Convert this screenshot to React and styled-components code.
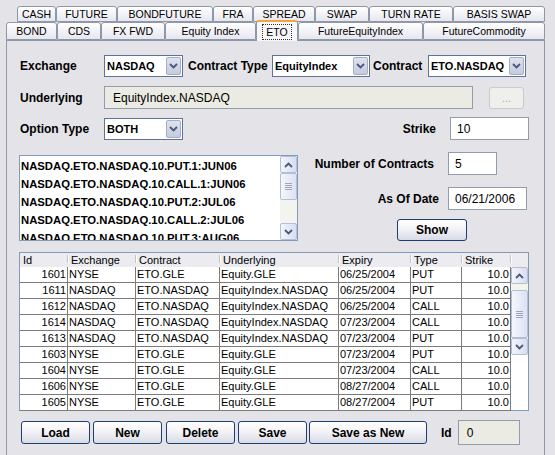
import React from 'react'
import styled, { createGlobalStyle } from 'styled-components'

const GlobalStyle = createGlobalStyle`
    html, body {
        margin: 0;
        padding: 0;
        background: #e3e3e8;
    }
    body {
        font-family: "Liberation Sans", Arial, sans-serif;
        font-size: 12px;
        color: #000;
    }
`

const Frame = styled.div`
    width: 555px;
    height: 455px;
    overflow: hidden;
    box-sizing: border-box;
    padding: 6px 0 0 6px;
`

const TabRow = styled.div`
    display: flex;
    align-items: flex-end;
    height: ${p => p.$h}px;
    padding-left: ${p => p.$indent}px;
`

const Tab = styled.div`
    position: relative;
    box-sizing: border-box;
    width: ${p => p.$w}px;
    height: ${p => (p.$active ? 'calc(100% + 3px)' : '100%')};
    margin-bottom: ${p => (p.$active ? '-1px' : '0')};
    z-index: ${p => (p.$active ? 2 : 1)};
    border: 1px solid #8f98a8;
    border-bottom: ${p => (p.$active ? 'none' : '1px solid #8f98a8')};
    border-top: ${p => (p.$active ? '2px solid #f3a73a' : '1px solid #8f98a8')};
    border-radius: 3px 3px 0 0;
    background: ${p => (p.$active ? '#f7f7f9' : 'linear-gradient(#ffffff, #e6e7ef)')};
    font-size: 10.5px;
    display: flex;
    align-items: center;
    justify-content: center;
    white-space: nowrap;
    span {
        padding: 1px 3px;
        border: ${p => (p.$active ? '1px dotted #333' : '1px solid transparent')};
    }
`

const Panel = styled.div`
    width: 539px;
    height: 430px;
    box-sizing: border-box;
    border: 1px solid #8f98a8;
    border-bottom: none;
    padding: 14px 0 0 12px;
    background: #e3e3e8;
`

const Content = styled.div`
    width: 510px;
    display: flex;
    flex-direction: column;
`

const Row = styled.div`
    display: flex;
    align-items: center;
    height: ${p => p.$h}px;
    margin-top: ${p => p.$mt || 0}px;
`

const Label = styled.div`
    box-sizing: border-box;
    width: ${p => (p.$w ? `${p.$w}px` : 'auto')};
    margin-left: ${p => p.$ml || 0}px;
    margin-right: ${p => p.$mr || 0}px;
    text-align: ${p => p.$align || 'left'};
    font-weight: bold;
    font-size: 12px;
    white-space: nowrap;
    padding-left: ${p => p.$pl || 0}px;
`

const Combo = styled.div`
    box-sizing: border-box;
    display: flex;
    width: ${p => p.$w}px;
    height: 22px;
    border: 1px solid #5d7397;
    background: #fff;
`

const ComboText = styled.div`
    flex: 1;
    display: flex;
    align-items: center;
    padding-left: 2px;
    font-weight: bold;
    font-size: 11px;
    white-space: nowrap;
    overflow: hidden;
`

const ComboArrow = styled.div`
    width: 15px;
    margin: 1px;
    box-sizing: border-box;
    border: 1px solid #a7aec4;
    border-radius: 2px;
    background: linear-gradient(#dfe2ee, #c5cbdf);
    display: flex;
    align-items: center;
    justify-content: center;
`

const Field = styled.div`
    box-sizing: border-box;
    width: ${p => p.$w}px;
    height: ${p => p.$h || 23}px;
    margin-left: ${p => p.$ml || 0}px;
    border: 1px solid #939cab;
    background: ${p => (p.$disabled ? '#ebebe4' : '#fff')};
    padding-left: ${p => p.$pl || 6}px;
    display: flex;
    align-items: center;
    font-size: 12px;
    white-space: nowrap;
`

const GhostButton = styled.div`
    box-sizing: border-box;
    width: 35px;
    height: 22px;
    margin-left: 16px;
    border: 1px solid #c8cad0;
    border-radius: 3px;
    background: #efefec;
    color: #aca899;
    font-size: 11px;
    display: flex;
    align-items: center;
    justify-content: center;
`

const Spacer = styled.div`
    flex: 1;
`

const Section = styled.div`
    display: flex;
    margin-top: 12px;
    height: 89px;
`

const ListBox = styled.div`
    box-sizing: border-box;
    display: flex;
    width: 279px;
    height: 86px;
    margin-top: 3px;
    border: 1px solid #7f9db9;
    background: #fff;
`

const ListItems = styled.div`
    flex: 1;
    overflow: hidden;
    padding: 1px 0 0 1px;
`

const ListItem = styled.div`
    height: 18px;
    line-height: 18px;
    font-weight: bold;
    font-size: 11.3px;
    white-space: nowrap;
`

const VScroll = styled.div`
    width: 17px;
    display: flex;
    flex-direction: column;
    background: #f3f3f0;
`

const ScrollBtn = styled.div`
    box-sizing: border-box;
    height: 17px;
    border: 1px solid #b3bfd9;
    border-radius: 2px;
    background: linear-gradient(90deg, #f3f5fc, #d8def0);
    display: flex;
    align-items: center;
    justify-content: center;
`

const Track = styled.div`
    flex: 1;
    display: flex;
    flex-direction: column;
    padding-top: ${p => p.$offset || 0}px;
`

const Thumb = styled.div`
    box-sizing: border-box;
    height: ${p => p.$h}px;
    border: 1px solid #b3bfd9;
    border-radius: 2px;
    background: linear-gradient(90deg, #f5f6fc, #dde2f2);
    display: flex;
    align-items: center;
    justify-content: center;
`

const Grip = styled.div`
    width: 7px;
    height: 7px;
    background: repeating-linear-gradient(#9aa5c0 0 1px, transparent 1px 2px);
`

const RightCol = styled.div`
    flex: 1;
    display: flex;
    flex-direction: column;
`

const PushButton = styled.div`
    box-sizing: border-box;
    width: ${p => p.$w}px;
    height: ${p => p.$h || 23}px;
    margin-left: ${p => p.$ml || 0}px;
    border: 1px solid #1e3d70;
    border-radius: 3px;
    background: linear-gradient(#ffffff 0%, #f3f3f7 45%, #d8dbe6 100%);
    font-weight: bold;
    font-size: 12px;
    display: flex;
    align-items: center;
    justify-content: center;
`

const Table = styled.div`
    box-sizing: border-box;
    display: flex;
    width: 510px;
    height: 159px;
    margin-top: 11px;
    border: 1px solid #7f9db9;
    background: #fff;
`

const TableMain = styled.div`
    width: 491px;
    display: flex;
    flex-direction: column;
`

const HeaderRow = styled.div`
    display: flex;
    height: 14px;
    background: #ebebf0;
`

const HeadCell = styled.div`
    position: relative;
    box-sizing: border-box;
    width: ${p => p.$w}px;
    padding-left: 3px;
    font-size: 11px;
    line-height: 14px;
    white-space: nowrap;
    &::after {
        content: '';
        position: absolute;
        right: 0;
        top: 2px;
        width: 1px;
        height: 8px;
        background: #c2c4cc;
        box-shadow: 1px 0 0 #fff;
    }
`

const BodyRow = styled.div`
    display: flex;
    height: 16px;
`

const Cell = styled.div`
    box-sizing: border-box;
    width: ${p => p.$w}px;
    height: 16px;
    border-right: 1px solid #7c7c7c;
    border-bottom: 1px solid #7c7c7c;
    padding: 0 ${p => (p.$right ? 1 : 0)}px 0 ${p => (p.$right ? 0 : 1)}px;
    text-align: ${p => (p.$right ? 'right' : 'left')};
    font-size: 11px;
    line-height: 15px;
    white-space: nowrap;
    overflow: hidden;
`

const TableSide = styled.div`
    width: 17px;
    display: flex;
    flex-direction: column;
`

const HeadFill = styled.div`
    height: 14px;
    background: #ebebf0;
`

const Chevron = ({ up }) => (
    <svg width='9' height='6' viewBox='0 0 9 6'>
        <polyline
            points={up ? '1,5 4.5,1.5 8,5' : '1,1 4.5,4.5 8,1'}
            fill='none'
            stroke='#4a5878'
            strokeWidth='1.8'
        />
    </svg>
)

const Scrollbar = ({ thumb, offset }) => (
    <VScroll>
        <ScrollBtn><Chevron up /></ScrollBtn>
        <Track $offset={offset}>
            <Thumb $h={thumb}><Grip /></Thumb>
        </Track>
        <ScrollBtn><Chevron /></ScrollBtn>
    </VScroll>
)

const tabsTop = [
    ['CASH', 39], ['FUTURE', 61], ['BONDFUTURE', 96], ['FRA', 40],
    ['SPREAD', 62], ['SWAP', 54], ['TURN RATE', 84], ['BASIS SWAP', 92],
]

const tabsBottom = [
    ['BOND', 51], ['CDS', 44], ['FX FWD', 64], ['Equity Index', 91],
    ['ETO', 42], ['FutureEquityIndex', 125], ['FutureCommodity', 122],
]

const listItems = [
    'NASDAQ.ETO.NASDAQ.10.PUT.1:JUN06',
    'NASDAQ.ETO.NASDAQ.10.CALL.1:JUN06',
    'NASDAQ.ETO.NASDAQ.10.PUT.2:JUL06',
    'NASDAQ.ETO.NASDAQ.10.CALL.2:JUL06',
    'NASDAQ.ETO.NASDAQ.10.PUT.3:AUG06',
]

const columns = [
    ['Id', 48], ['Exchange', 68], ['Contract', 84], ['Underlying', 119],
    ['Expiry', 72], ['Type', 51], ['Strike', 49],
]

const rows = [
    ['1601', 'NYSE', 'ETO.GLE', 'Equity.GLE', '06/25/2004', 'PUT'],
    ['1611', 'NASDAQ', 'ETO.NASDAQ', 'EquityIndex.NASDAQ', '06/25/2004', 'PUT'],
    ['1612', 'NASDAQ', 'ETO.NASDAQ', 'EquityIndex.NASDAQ', '06/25/2004', 'CALL'],
    ['1614', 'NASDAQ', 'ETO.NASDAQ', 'EquityIndex.NASDAQ', '07/23/2004', 'CALL'],
    ['1613', 'NASDAQ', 'ETO.NASDAQ', 'EquityIndex.NASDAQ', '07/23/2004', 'PUT'],
    ['1603', 'NYSE', 'ETO.GLE', 'Equity.GLE', '07/23/2004', 'PUT'],
    ['1604', 'NYSE', 'ETO.GLE', 'Equity.GLE', '07/23/2004', 'CALL'],
    ['1606', 'NYSE', 'ETO.GLE', 'Equity.GLE', '08/27/2004', 'CALL'],
    ['1605', 'NYSE', 'ETO.GLE', 'Equity.GLE', '08/27/2004', 'PUT'],
]

const ComboBox = ({ w, value }) => (
    <Combo $w={w}>
        <ComboText>{value}</ComboText>
        <ComboArrow><Chevron /></ComboArrow>
    </Combo>
)

const App = () => {
    return (
        <Frame>
            <GlobalStyle />
            <TabRow $h={16} $indent={11}>
                {tabsTop.map(([name, w]) => (
                    <Tab key={name} $w={w}><span>{name}</span></Tab>
                ))}
            </TabRow>
            <TabRow $h={18} $indent={0}>
                {tabsBottom.map(([name, w]) => (
                    <Tab key={name} $w={w} $active={name === 'ETO'}><span>{name}</span></Tab>
                ))}
            </TabRow>

            <Panel>
                <Content>
                    <Row $h={22}>
                        <Label $w={85} $pl={1}>Exchange</Label>
                        <ComboBox w={79} value='NASDAQ' />
                        <Label $w={84} $ml={5}>Contract Type</Label>
                        <ComboBox w={98} value='EquityIndex' />
                        <Label $w={55} $ml={3}>Contract</Label>
                        <ComboBox w={98} value='ETO.NASDAQ' />
                    </Row>

                    <Row $h={23} $mt={9}>
                        <Label $w={85} $pl={1}>Underlying</Label>
                        <Field $w={369} $disabled $pl={8}>EquityIndex.NASDAQ</Field>
                        <GhostButton>...</GhostButton>
                    </Row>

                    <Row $h={23} $mt={8}>
                        <Label $w={85} $pl={1}>Option Type</Label>
                        <ComboBox w={79} value='BOTH' />
                        <Spacer />
                        <Label $align='right'>Strike</Label>
                        <Field $w={79} $ml={14}>10</Field>
                    </Row>

                    <Section>
                        <ListBox>
                            <ListItems>
                                {listItems.map(item => (
                                    <ListItem key={item}>{item}</ListItem>
                                ))}
                            </ListItems>
                            <Scrollbar thumb={27} offset={0} />
                        </ListBox>
                        <RightCol>
                            <Row $h={23}>
                                <Label $w={136} $align='right'>Number of Contracts</Label>
                                <Field $w={49} $ml={14}>5</Field>
                            </Row>
                            <Row $h={23} $mt={12}>
                                <Label $w={141} $align='right'>As Of Date</Label>
                                <Field $w={79} $ml={9}>06/21/2006</Field>
                            </Row>
                            <Row $h={22} $mt={9}>
                                <PushButton $w={70} $h={22} $ml={99}>Show</PushButton>
                            </Row>
                        </RightCol>
                    </Section>

                    <Table>
                        <TableMain>
                            <HeaderRow>
                                {columns.map(([name, w]) => (
                                    <HeadCell key={name} $w={w}>{name}</HeadCell>
                                ))}
                            </HeaderRow>
                            {rows.map(r => (
                                <BodyRow key={r[0]}>
                                    <Cell $w={48} $right>{r[0]}</Cell>
                                    <Cell $w={68}>{r[1]}</Cell>
                                    <Cell $w={84}>{r[2]}</Cell>
                                    <Cell $w={119}>{r[3]}</Cell>
                                    <Cell $w={72}>{r[4]}</Cell>
                                    <Cell $w={51}>{r[5]}</Cell>
                                    <Cell $w={49} $right>10.0</Cell>
                                </BodyRow>
                            ))}
                        </TableMain>
                        <TableSide>
                            <HeadFill />
                            <Scrollbar thumb={48} offset={6} />
                        </TableSide>
                    </Table>

                    <Row $h={25} $mt={9}>
                        <PushButton $w={69} $ml={2}>Load</PushButton>
                        <PushButton $w={69} $ml={3}>New</PushButton>
                        <PushButton $w={69} $ml={4}>Delete</PushButton>
                        <PushButton $w={69} $ml={3}>Save</PushButton>
                        <PushButton $w={118} $ml={2}>Save as New</PushButton>
                        <Label $ml={14}>Id</Label>
                        <Field $w={62} $h={25} $ml={6} $disabled $pl={8}>0</Field>
                    </Row>
                </Content>
            </Panel>
        </Frame>
    )
}

export default App
